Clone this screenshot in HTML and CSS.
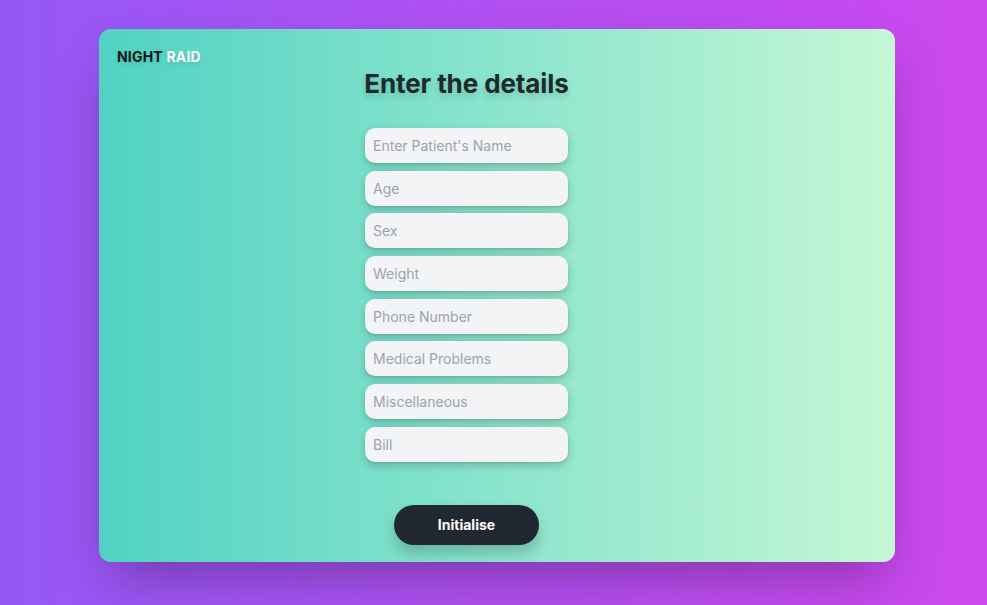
FILE: index.html
```html
<!DOCTYPE html>
<html lang="en">
<head>
<meta charset="utf-8">
<title>Night Raid</title>
<link rel="stylesheet" href="styles.css">
</head>
<body>
  <div class="card">
    <div class="brand"><span class="dark">NIGHT</span> <span class="light">RAID</span></div>
    <form class="form">
      <h1 class="title">Enter the details</h1>
      <div class="fields">
        <input class="field" type="text" placeholder="Enter Patient's Name">
        <input class="field" type="text" placeholder="Age">
        <input class="field" type="text" placeholder="Sex">
        <input class="field" type="text" placeholder="Weight">
        <input class="field" type="text" placeholder="Phone Number">
        <input class="field" type="text" placeholder="Medical Problems">
        <input class="field" type="text" placeholder="Miscellaneous">
        <input class="field" type="text" placeholder="Bill">
      </div>
      <button class="btn" type="button">Initialise</button>
    </form>
  </div>
</body>
</html>
```
FILE: styles.css
```css
* { box-sizing: border-box; }
html, body { height: 100%; }
body {
  margin: 0;
  font-family: Inter, "Noto Sans", sans-serif;
  background: linear-gradient(to right, #9558f5, #cc47ee);
  padding: 29px 92px 0 99px;
  overflow: hidden;
}
.card {
  width: 796px;
  height: 533px;
  border-radius: 12px;
  background: linear-gradient(to right, #50d2c4, #c5f7d5);
  box-shadow: 0 25px 50px -12px rgba(0, 0, 0, 0.3);
  padding: 20px 18px 17px 18px;
  display: flex;
  flex-direction: column;
}
.brand {
  font-size: 14px;
  line-height: 16px;
  font-weight: 700;
  letter-spacing: 0.2px;
  text-shadow: 0 2px 4px rgba(0,0,0,0.12);
}
.brand .dark { color: #0f1a1a; }
.brand .light { color: #ffffff; }
.form {
  margin-left: 248px;
  width: 203px;
  display: flex;
  flex-direction: column;
  align-items: center;
}
.title {
  margin: 3px -40px 0;
  font-size: 26px;
  line-height: 32px;
  font-weight: 700;
  color: #1c2b2b;
  white-space: nowrap;
  letter-spacing: -0.1px;
  text-shadow: 0 4px 6px rgba(0, 0, 0, 0.15);
}
.fields {
  margin-top: 28px;
  width: 100%;
  display: flex;
  flex-direction: column;
  gap: 7.7px;
}
.field {
  width: 100%;
  height: 35px;
  border: none;
  outline: none;
  border-radius: 10px;
  background: #f3f4f6;
  padding: 0 8px;
  font-family: inherit;
  font-size: 14px;
  color: #374151;
  box-shadow: 0 4px 8px rgba(0, 0, 0, 0.18), 0 1px 2px rgba(0,0,0,0.1);
}
.field::placeholder { color: #9ca3af; }
.btn {
  margin-top: 43px;
  width: 145px;
  height: 40px;
  border: none;
  border-radius: 999px;
  background: #222831;
  color: #ffffff;
  font-family: inherit;
  font-size: 14px;
  font-weight: 700;
  box-shadow: 0 8px 14px rgba(0, 0, 0, 0.2);
}
```
